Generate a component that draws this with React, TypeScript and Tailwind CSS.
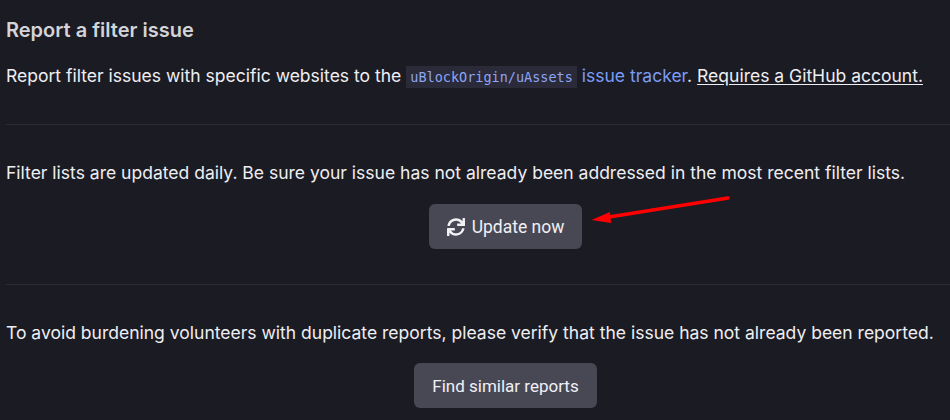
import { FaSync } from "react-icons/fa";

export default function App() {
  return (
    <div className="relative h-[420px] w-[950px] overflow-hidden bg-[#1b1b23] font-['Inter',sans-serif] text-[17.52px] leading-6 text-[#eeeef2]">
      <div className="w-[1005px] pl-1.5">
        <h2 className="pt-[18px] text-[20px] font-semibold leading-6 text-[#d4d4d8]">Report a filter issue</h2>

        <p className="mt-[22px] whitespace-nowrap">
          Report filter issues with specific websites to the{" "}
          <code className="bg-[#2a2a38] px-1 py-[3px] font-['DejaVu_Sans_Mono',monospace] text-[13.5px] text-[#8ea4f5]">
            uBlockOrigin/uAssets
          </code>{" "}
          <a className="text-[#7b9cf5]">issue tracker</a>.{" "}
          <a className="underline underline-offset-2">Requires a GitHub account.</a>
        </p>

        <hr className="mt-[35px] border-[#2c2c36]" />

        <p className="mt-9 whitespace-nowrap">
          Filter lists are updated daily. Be sure your issue has not already been addressed in the most recent filter lists.
        </p>
        <div className="mt-[19px] flex justify-center">
          <button className="flex h-[45px] w-[153px] items-center justify-center gap-[7px] rounded-md bg-[#484855] font-['Roboto',sans-serif] text-[17.5px] text-[#f0f0f5]">
            <FaSync className="text-[#f0f0f5]" size={18} />
            Update now
          </button>
        </div>

        <hr className="mt-[35px] border-[#2c2c36]" />

        <p className="mt-9 whitespace-nowrap">
          To avoid burdening volunteers with duplicate reports, please verify that the issue has not already been reported.
        </p>
        <div className="mt-[18px] flex justify-center">
          <button className="h-[45px] w-[183px] rounded-md bg-[#484855] font-['Roboto',sans-serif] text-[17px] text-[#f0f0f5]">Find similar reports</button>
        </div>
      </div>

      {/* red annotation arrow */}
      <svg className="absolute left-[585px] top-[190px]" width="150" height="40" viewBox="0 0 150 40">
        <line x1="143" y1="8" x2="24" y2="27" stroke="#ff0000" strokeWidth="3.5" strokeLinecap="round" />
        <polygon points="6.5,30 25,22 26,33" fill="#ff0000" />
      </svg>
    </div>
  );
}
